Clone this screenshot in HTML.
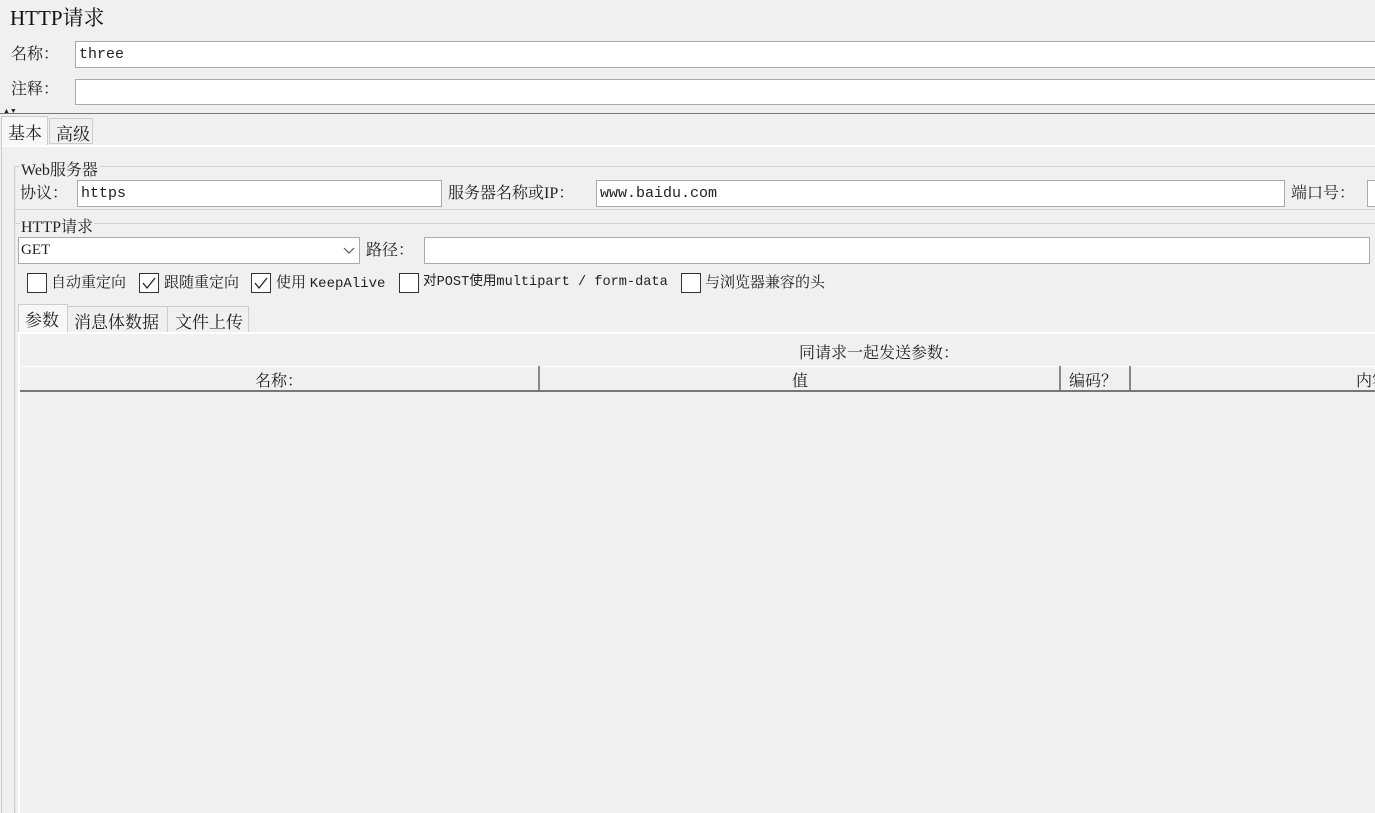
<!DOCTYPE html>
<html style="overflow:hidden"><head><meta charset="utf-8"><style>
html,body{overflow:hidden}
body{margin:0;width:1375px;height:813px;background:#f0f0f0;position:relative;font-family:"Liberation Serif","Noto Serif CJK SC","Noto Sans CJK SC",serif;font-size:15px;color:#222}
.a{position:absolute;white-space:nowrap}
.in{position:absolute;background:#fff;border:1px solid #aaa;box-sizing:border-box}
.mono{font-family:"Liberation Mono","Noto Sans CJK SC",monospace;font-size:14px}
.cb{position:absolute;width:20px;height:20px;border:1px solid #333;background:#fff;box-sizing:border-box}
.lab{line-height:20px}
</style></head><body>
<div class="a" style="left:10px;top:2px;font-size:21px;color:#111">HTTP请求</div>
<div class="a lab" style="left:11px;top:45px;font-size:16px">名称：</div>
<div class="in" style="left:75px;top:41px;width:1310px;height:27px"><span class="a mono" style="left:3px;top:4px;font-size:15px">three</span></div>
<div class="a lab" style="left:11px;top:80px;font-size:16px">注释：</div>
<div class="in" style="left:75px;top:79px;width:1310px;height:26px"></div>
<div class="a" style="left:0;top:113px;width:1375px;height:1px;background:#777"></div>
<div class="a" style="left:3px;top:108px;font-size:7px;line-height:7px">▲▼</div>
<div class="a" style="left:1px;top:116px;width:47px;height:30px;border:1px solid #ccc;border-bottom:none;box-sizing:border-box;background:#f7f7f7"></div>
<div class="a" style="left:8px;top:119px;font-size:17px">基本</div>
<div class="a" style="left:49px;top:118px;width:44px;height:26px;border:1px solid #ccc;box-sizing:border-box"></div>
<div class="a" style="left:56px;top:120px;font-size:17px">高级</div>
<div class="a" style="left:1px;top:145px;width:1374px;height:2px;background:#fff"></div>
<div class="a" style="left:1px;top:145px;width:1px;height:668px;background:#ccc"></div>
<div class="a" style="left:14px;top:166px;width:1px;height:647px;background:#c8c8c8"></div>
<div class="a" style="left:15px;top:166px;width:1px;height:647px;background:#e8e8e8"></div>
<div class="a" style="left:14px;top:166px;width:1370px;height:44px;border:1px solid #d0d0d0;box-sizing:border-box"></div>
<div class="a" style="left:20px;top:157px;font-size:16px;background:#f0f0f0;padding:0 1px">Web服务器</div>
<div class="a lab" style="left:20px;top:184px;font-size:16px">协议：</div>
<div class="in" style="left:77px;top:180px;width:365px;height:27px"><span class="a mono" style="left:3px;top:4px;font-size:15px">https</span></div>
<div class="a lab" style="left:448px;top:184px;font-size:16px">服务器名称或IP：</div>
<div class="in" style="left:596px;top:180px;width:689px;height:27px"><span class="a mono" style="left:3px;top:4px;font-size:15px">www.baidu.com</span></div>
<div class="a lab" style="left:1291px;top:184px;font-size:16px">端口号：</div>
<div class="in" style="left:1367px;top:180px;width:20px;height:27px"></div>
<div class="a" style="left:14px;top:223px;width:1370px;height:580px;border:1px solid #d0d0d0;border-bottom:none;box-sizing:border-box"></div>
<div class="a" style="left:20px;top:214px;font-size:16px;background:#f0f0f0;padding:0 1px">HTTP请求</div>
<div class="in" style="left:18px;top:237px;width:342px;height:27px"><span class="a" style="left:2px;top:4px;font-size:15px">GET</span>
<svg class="a" style="left:324px;top:9px" width="12" height="8"><path d="M1 1L6 6L11 1" stroke="#555" fill="none" stroke-width="1.2"/></svg></div>
<div class="a lab" style="left:366px;top:241px;font-size:16px">路径：</div>
<div class="in" style="left:424px;top:237px;width:946px;height:27px"></div>
<div class="cb" style="left:27px;top:273px"></div>
<div class="a lab" style="left:51px;top:273px;font-size:15px">自动重定向</div>
<div class="cb" style="left:139px;top:273px"><svg width="18" height="18"><path d="M3 9L7 14L15 4" stroke="#222" fill="none" stroke-width="1.3"/></svg></div>
<div class="a lab" style="left:164px;top:273px;font-size:15px">跟随重定向</div>
<div class="cb" style="left:251px;top:273px"><svg width="18" height="18"><path d="M3 9L7 14L15 4" stroke="#222" fill="none" stroke-width="1.3"/></svg></div>
<div class="a lab" style="left:276px;top:273px;font-size:15px">使用 <span class="mono">KeepAlive</span></div>
<div class="cb" style="left:399px;top:273px"></div>
<div class="a lab mono" style="left:423px;top:273px;font-size:13.6px">对POST使用multipart / form-data</div>
<div class="cb" style="left:681px;top:273px"></div>
<div class="a lab" style="left:705px;top:273px;font-size:15px">与浏览器兼容的头</div>
<div class="a" style="left:18px;top:304px;width:50px;height:30px;border:1px solid #ccc;border-bottom:none;box-sizing:border-box;background:#f7f7f7"></div>
<div class="a" style="left:25px;top:306px;font-size:17px">参数</div>
<div class="a" style="left:67px;top:306px;width:101px;height:27px;border:1px solid #ccc;box-sizing:border-box"></div>
<div class="a" style="left:74px;top:308px;font-size:17px">消息体数据</div>
<div class="a" style="left:167px;top:306px;width:82px;height:27px;border:1px solid #ccc;box-sizing:border-box"></div>
<div class="a" style="left:175px;top:308px;font-size:17px">文件上传</div>
<div class="a" style="left:18px;top:332px;width:1357px;height:2px;background:#fff"></div>
<div class="a" style="left:18px;top:332px;width:2px;height:481px;background:#fff"></div>
<div class="a" style="left:799px;top:340px;font-size:16px">同请求一起发送参数：</div>
<div class="a" style="left:20px;top:366px;width:1355px;height:23px;background:#f0f0f0;border-top:1px solid #fff;border-bottom:2px solid #777"></div>
<div class="a" style="left:538px;top:366px;width:2px;height:24px;background:#888"></div>
<div class="a" style="left:1059px;top:366px;width:2px;height:24px;background:#888"></div>
<div class="a" style="left:1129px;top:366px;width:2px;height:24px;background:#888"></div>
<div class="a" style="left:255px;top:368px;font-size:16px">名称：</div>
<div class="a" style="left:792px;top:368px;font-size:16px">值</div>
<div class="a" style="left:1069px;top:368px;font-size:16px">编码？</div>
<div class="a" style="left:1356px;top:368px;font-size:16px">内容</div>
</body></html>
